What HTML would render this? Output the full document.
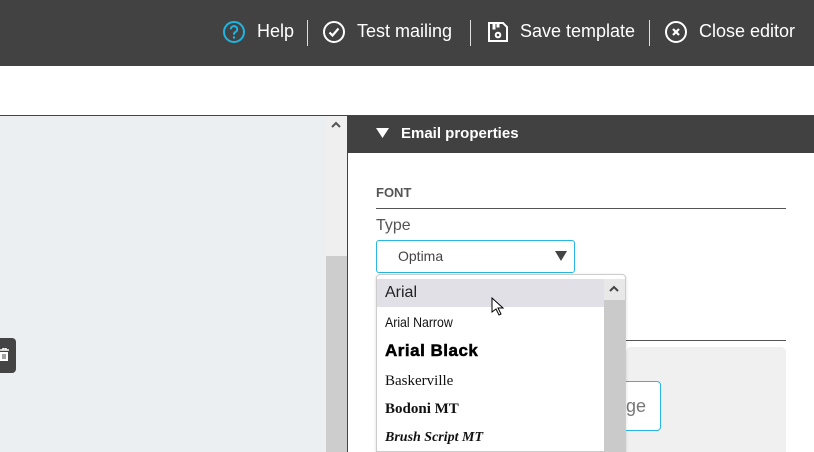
<!DOCTYPE html>
<html><head><style>
*{margin:0;padding:0;box-sizing:border-box}
body{width:814px;height:452px;overflow:hidden;background:#fff;font-family:"Liberation Sans",sans-serif;position:relative}
.abs{position:absolute}
.top{left:0;top:0;width:814px;height:66px;background:#424242;color:#fff;font-size:18px}
.sep{position:absolute;top:20px;width:1px;height:26px;background:#ddd}
</style></head><body>
<div class="abs top">
  <svg class="abs" style="left:222px;top:20px" width="24" height="24" viewBox="0 0 24 24"><circle cx="12" cy="12" r="10" fill="none" stroke="#1fb5e0" stroke-width="2"/><path d="M8.8 9.3a3.2 3.2 0 1 1 4.5 2.9c-.9.4-1.3 1-1.3 2v.6" fill="none" stroke="#1fb5e0" stroke-width="2"/><circle cx="12" cy="17.5" r="1.2" fill="#1fb5e0"/></svg>
  <span class="abs" style="left:257px;top:21px">Help</span>
  <div class="sep" style="left:307px"></div>
  <svg class="abs" style="left:322px;top:20px" width="24" height="24" viewBox="0 0 24 24"><circle cx="12" cy="12" r="10" fill="none" stroke="#fff" stroke-width="2"/><path d="M7.5 12.5l3 3 6-7" fill="none" stroke="#fff" stroke-width="2.2"/></svg>
  <span class="abs" style="left:357px;top:21px">Test mailing</span>
  <div class="sep" style="left:470px"></div>
  <svg class="abs" style="left:486px;top:20px" width="24" height="24" viewBox="0 0 24 24"><path d="M3 3h14l4 4v14H3z" fill="none" stroke="#fff" stroke-width="2"/><path d="M7 4v5h2V4M11 4v3h2V4" fill="#fff" stroke="#fff" stroke-width="1"/><circle cx="12" cy="15" r="2.3" fill="none" stroke="#fff" stroke-width="2"/></svg>
  <span class="abs" style="left:520px;top:21px">Save template</span>
  <div class="sep" style="left:649px"></div>
  <svg class="abs" style="left:664px;top:20px" width="24" height="24" viewBox="0 0 24 24"><circle cx="12" cy="12" r="10" fill="none" stroke="#fff" stroke-width="2"/><path d="M9 9l6 6M15 9l-6 6" stroke="#fff" stroke-width="2.2"/></svg>
  <span class="abs" style="left:699px;top:21px">Close editor</span>
</div>
<div class="abs" style="left:0;top:115px;width:814px;height:1px;background:#444"></div>
<div class="abs" style="left:0;top:116px;width:326px;height:336px;background:#ebeff2"></div>
<div class="abs" style="left:326px;top:116px;width:21px;height:140px;background:#efefef"></div>
<div class="abs" style="left:326px;top:256px;width:21px;height:196px;background:#cdcdcd"></div>
<svg class="abs" style="left:330px;top:120px" width="12" height="10" viewBox="0 0 12 10"><path d="M2 7l4-4 4 4" fill="none" stroke="#555" stroke-width="2"/></svg>
<div class="abs" style="left:347px;top:116px;width:1px;height:336px;background:#444"></div>
<div class="abs" style="left:0;top:338px;width:16px;height:35px;background:#444;border-radius:0 4px 4px 0"></div>
<svg class="abs" style="left:0;top:348px" width="10" height="14" viewBox="0 0 10 14"><path d="M0 2h9M3 2V0h3v2" stroke="#fff" stroke-width="1.5" fill="none"/><path d="M0 4h8v9H0z" fill="#fff"/><path d="M3 6v5M5 6v5" stroke="#444" stroke-width="1"/></svg>
<div class="abs" style="left:348px;top:116px;width:466px;height:37px;background:#414141"></div>
<svg class="abs" style="left:376px;top:127px" width="13" height="12" viewBox="0 0 13 12"><path d="M0 1h13L6.5 11z" fill="#fff"/></svg>
<span class="abs" style="left:401px;top:125px;color:#fff;font-size:15px;font-weight:bold">Email properties</span>
<span class="abs" style="left:376px;top:185px;color:#555;font-size:13px;font-weight:bold">FONT</span>
<div class="abs" style="left:376px;top:208px;width:410px;height:1px;background:#555"></div>
<span class="abs" style="left:376px;top:217px;color:#555;font-size:16px">Type</span>
<div class="abs" style="left:376px;top:240px;width:199px;height:33px;border:1px solid #29b6e0;border-radius:3px"></div>
<span class="abs" style="left:398px;top:248px;color:#444;font-size:14px">Optima</span>
<svg class="abs" style="left:555px;top:251px" width="12" height="10" viewBox="0 0 12 10"><path d="M0 0h12L6 10z" fill="#444"/></svg>
<div class="abs" style="left:626px;top:340px;width:160px;height:1px;background:#555"></div>
<div class="abs" style="left:626px;top:347px;width:160px;height:105px;background:#f0f0f0;border-radius:5px 5px 0 0"></div>
<div class="abs" style="left:590px;top:381px;width:71px;height:50px;border:1px solid #29b6e0;border-radius:4px;background:#fff"></div>
<span class="abs" style="left:626px;top:396px;color:#777;font-size:18px">ge</span>
<div class="abs" style="left:376px;top:274px;width:250px;height:178px;background:#fff;border:1px solid #ccc;border-radius:4px 4px 0 0;box-shadow:0 1px 3px rgba(0,0,0,.15)"></div>
<div class="abs" style="left:377px;top:279px;width:227px;height:28px;background:#e0e0e6"></div>
<div class="abs" style="left:604px;top:279px;width:21px;height:173px;background:#cacaca"></div>
<div class="abs" style="left:604px;top:279px;width:21px;height:21px;background:#e8e8e8"></div>
<svg class="abs" style="left:608px;top:284px" width="12" height="10" viewBox="0 0 12 10"><path d="M2 7l4-4 4 4" fill="none" stroke="#444" stroke-width="2"/></svg>
<span class="abs" style="left:385px;top:284px;font-size:16px;color:#222">Arial</span>
<span class="abs" style="left:385px;top:314px;font-size:14px;color:#111;transform:scaleX(.88);transform-origin:left">Arial Narrow</span>
<span class="abs" style="left:385px;top:341px;font-size:17px;font-weight:900;color:#000;letter-spacing:0.5px;-webkit-text-stroke:0.5px #000">Arial Black</span>
<span class="abs" style="left:385px;top:373px;font-size:15px;font-family:'Liberation Serif',serif;color:#111">Baskerville</span>
<span class="abs" style="left:385px;top:401px;font-size:15px;font-weight:bold;font-family:'Liberation Serif',serif;color:#111">Bodoni MT</span>
<span class="abs" style="left:385px;top:430px;font-size:14px;font-style:italic;font-weight:bold;font-family:'Liberation Serif',serif;color:#111">Brush Script MT</span>
<svg class="abs" style="left:491px;top:297px" width="14" height="20" viewBox="0 0 14 20"><path d="M1 1v14l4-3 3 6 2-1-3-6h5z" fill="#fff" stroke="#000" stroke-width="1"/></svg>
</body></html>
